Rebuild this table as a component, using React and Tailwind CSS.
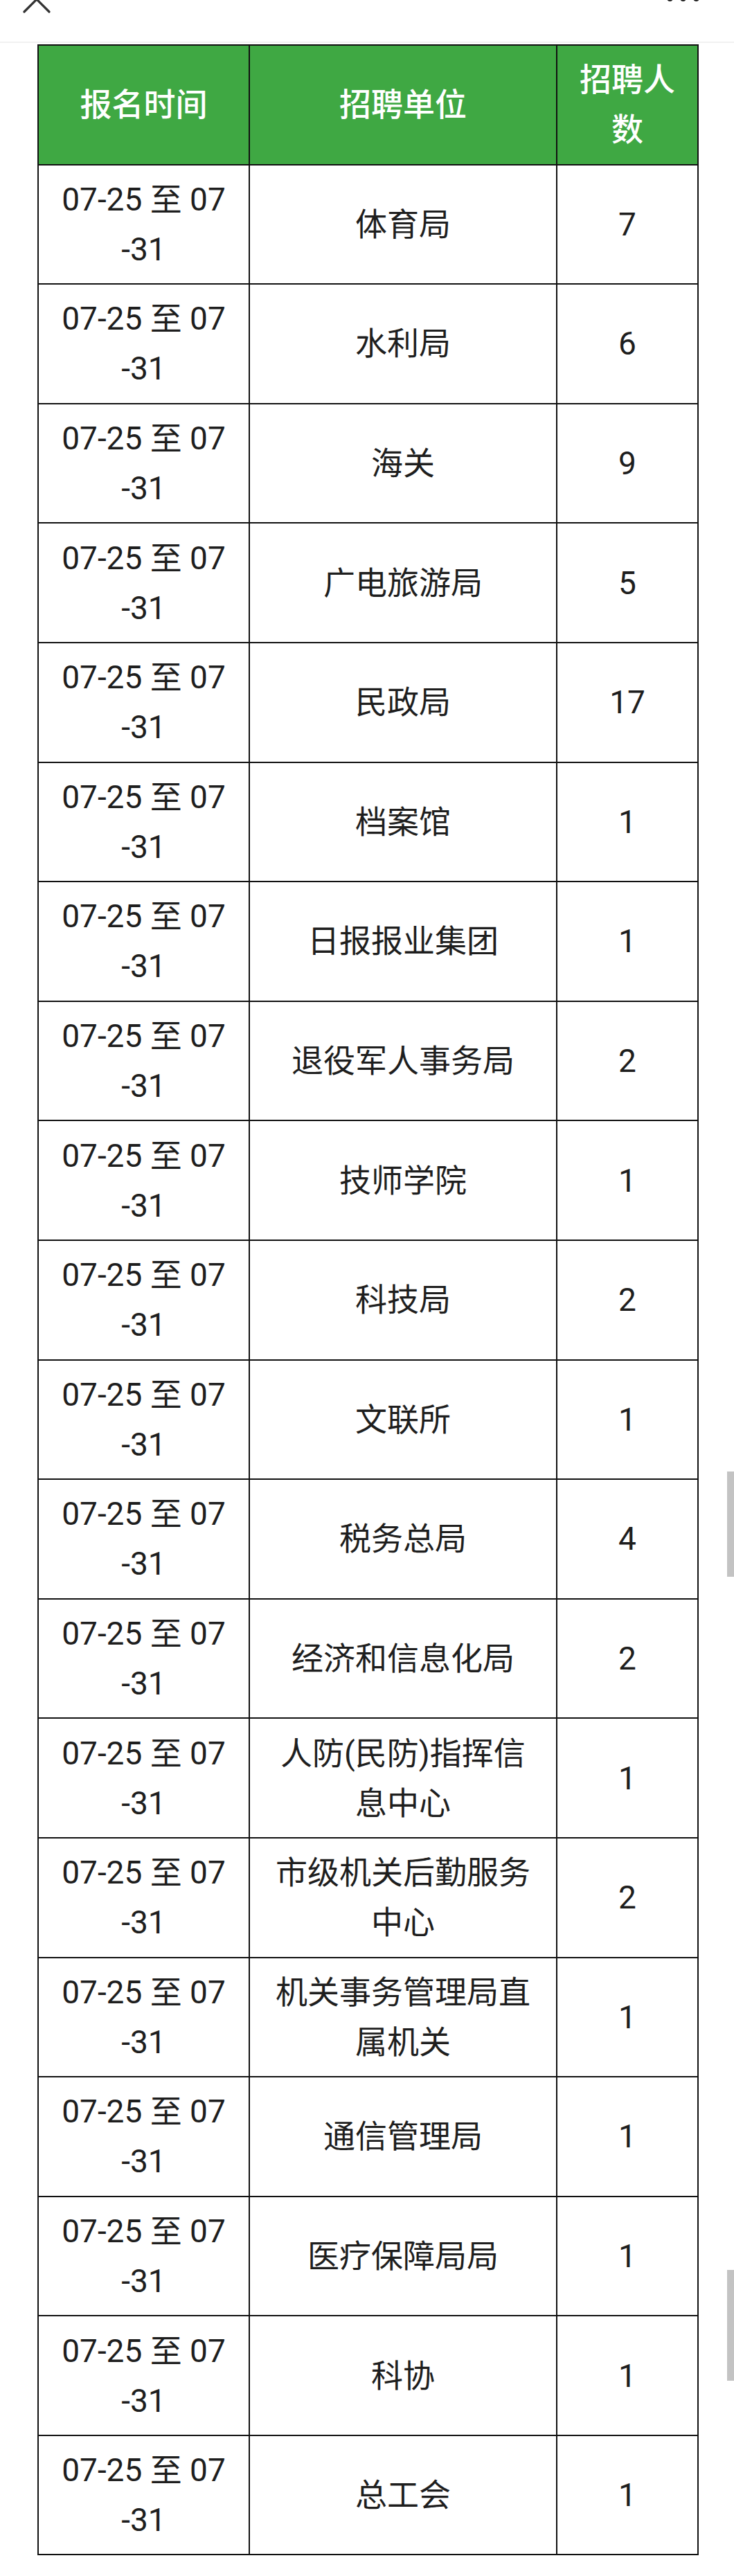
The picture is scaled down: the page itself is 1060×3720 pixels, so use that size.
import React from 'react'

const rows = [
  ['体育局', 7],
  ['水利局', 6],
  ['海关', 9],
  ['广电旅游局', 5],
  ['民政局', 17],
  ['档案馆', 1],
  ['日报报业集团', 1],
  ['退役军人事务局', 2],
  ['技师学院', 1],
  ['科技局', 2],
  ['文联所', 1],
  ['税务总局', 4],
  ['经济和信息化局', 2],
  ['人防(民防)指挥信息中心', 1],
  ['市级机关后勤服务中心', 2],
  ['机关事务管理局直属机关', 1],
  ['通信管理局', 1],
  ['医疗保障局局', 1],
  ['科协', 1],
  ['总工会', 1],
]

const cell = 'border-2 border-[#111] px-[30px] py-[13.3px] text-center align-middle break-all'

function TopBar() {
  return (
    <div className="relative h-[62px] border-b-2 border-[#f1f1f1]">
      <svg className="absolute left-[30px] top-[-24px]" width="46" height="46" viewBox="0 0 46 46">
        <path d="M5 5 L41 41 M41 5 L5 41" stroke="#333" strokeWidth="3.2" strokeLinecap="round" fill="none" />
      </svg>
      <div className="absolute right-[50px] top-[-7px] flex gap-[10px]">
        <span className="w-[9px] h-[9px] rounded-full bg-[#222]" />
        <span className="w-[9px] h-[9px] rounded-full bg-[#222]" />
        <span className="w-[9px] h-[9px] rounded-full bg-[#222]" />
      </div>
    </div>
  )
}

export default function App() {
  return (
    <div
      className="relative w-[1060px] min-h-[3720px] bg-white overflow-hidden"
      style={{ fontFamily: 'Roboto, "Noto Sans CJK SC", sans-serif' }}
    >
      <TopBar />
      <div className="pl-[54px] pt-[2px]">
        <table className="table-fixed border-collapse w-[953px] text-[46px] leading-[72px] text-[#1e1e1e]">
          <colgroup>
            <col className="w-[305px]" />
            <col className="w-[444px]" />
            <col className="w-[204px]" />
          </colgroup>
          <thead>
            <tr className="bg-[#3fa843] text-white">
              <th className={`${cell} font-medium`}>报名时间</th>
              <th className={`${cell} font-medium`}>招聘单位</th>
              <th className={`${cell} font-medium`}>招聘人数</th>
            </tr>
          </thead>
          <tbody>
            {rows.map(([unit, n]) => (
              <tr key={unit}>
                <td className={cell}>07-25 至 07-31</td>
                <td className={cell}>{unit}</td>
                <td className={cell}>{n}</td>
              </tr>
            ))}
          </tbody>
        </table>
      </div>

      {/* fast-scroll thumbs on the right edge */}
      <div className="absolute right-0 top-[2125px] w-[10px] h-[152px] bg-[#c3c3c3]" />
      <div className="absolute right-0 top-[3278px] w-[10px] h-[160px] bg-[#c3c3c3]" />
    </div>
  )
}
